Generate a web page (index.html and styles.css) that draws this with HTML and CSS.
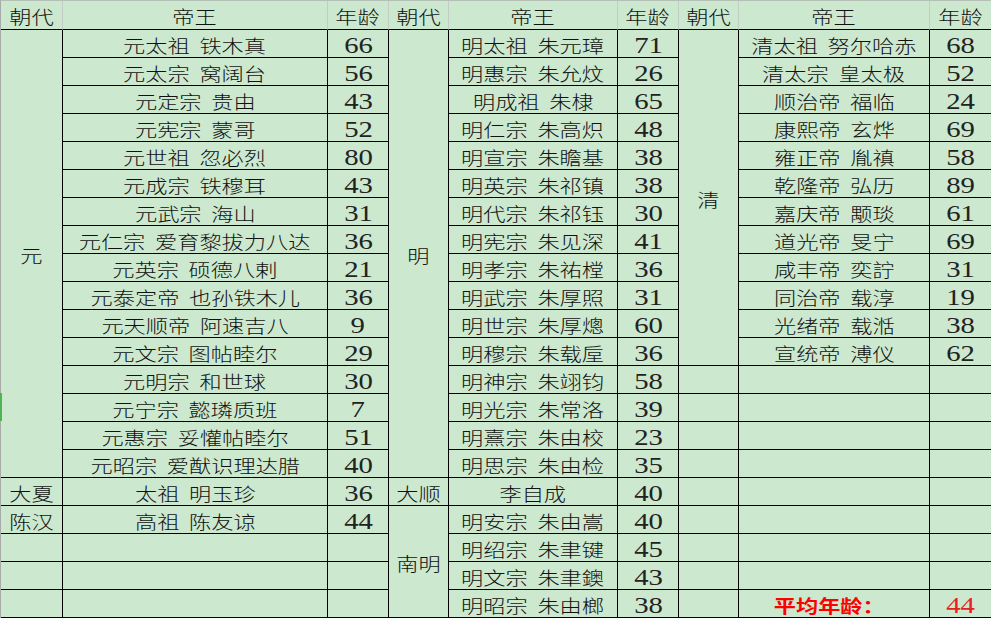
FILE: index.html
```html
<!DOCTYPE html>
<html lang="zh-CN">
<head>
<meta charset="utf-8">
<title>帝王年龄</title>
<link rel="stylesheet" href="styles.css">
</head>
<body>
<div class="sheet">
  <div class="c h"><span class="t">朝代</span></div>
  <div class="c h"><span class="t">帝王</span></div>
  <div class="c h"><span class="t">年龄</span></div>
  <div class="c h"><span class="t">朝代</span></div>
  <div class="c h"><span class="t">帝王</span></div>
  <div class="c h"><span class="t">年龄</span></div>
  <div class="c h"><span class="t">朝代</span></div>
  <div class="c h"><span class="t">帝王</span></div>
  <div class="c h r"><span class="t">年龄</span></div>

  <div class="c span16"><span class="t">元</span></div>
  <div class="c"><span class="t">元太祖 铁木真</span></div>
  <div class="c n"><span class="num">66</span></div>
  <div class="c span16"><span class="t">明</span></div>
  <div class="c"><span class="t">明太祖 朱元璋</span></div>
  <div class="c n"><span class="num">71</span></div>
  <div class="c span12"><span class="t">清</span></div>
  <div class="c"><span class="t">清太祖 努尔哈赤</span></div>
  <div class="c n r"><span class="num">68</span></div>

  <div class="c"><span class="t">元太宗 窝阔台</span></div>
  <div class="c n"><span class="num">56</span></div>
  <div class="c"><span class="t">明惠宗 朱允炆</span></div>
  <div class="c n"><span class="num">26</span></div>
  <div class="c"><span class="t">清太宗 皇太极</span></div>
  <div class="c n r"><span class="num">52</span></div>

  <div class="c"><span class="t">元定宗 贵由</span></div>
  <div class="c n"><span class="num">43</span></div>
  <div class="c"><span class="t">明成祖 朱棣</span></div>
  <div class="c n"><span class="num">65</span></div>
  <div class="c"><span class="t">顺治帝 福临</span></div>
  <div class="c n r"><span class="num">24</span></div>

  <div class="c"><span class="t">元宪宗 蒙哥</span></div>
  <div class="c n"><span class="num">52</span></div>
  <div class="c"><span class="t">明仁宗 朱高炽</span></div>
  <div class="c n"><span class="num">48</span></div>
  <div class="c"><span class="t">康熙帝 玄烨</span></div>
  <div class="c n r"><span class="num">69</span></div>

  <div class="c"><span class="t">元世祖 忽必烈</span></div>
  <div class="c n"><span class="num">80</span></div>
  <div class="c"><span class="t">明宣宗 朱瞻基</span></div>
  <div class="c n"><span class="num">38</span></div>
  <div class="c"><span class="t">雍正帝 胤禛</span></div>
  <div class="c n r"><span class="num">58</span></div>

  <div class="c"><span class="t">元成宗 铁穆耳</span></div>
  <div class="c n"><span class="num">43</span></div>
  <div class="c"><span class="t">明英宗 朱祁镇</span></div>
  <div class="c n"><span class="num">38</span></div>
  <div class="c"><span class="t">乾隆帝 弘历</span></div>
  <div class="c n r"><span class="num">89</span></div>

  <div class="c"><span class="t">元武宗 海山</span></div>
  <div class="c n"><span class="num">31</span></div>
  <div class="c"><span class="t">明代宗 朱祁钰</span></div>
  <div class="c n"><span class="num">30</span></div>
  <div class="c"><span class="t">嘉庆帝 颙琰</span></div>
  <div class="c n r"><span class="num">61</span></div>

  <div class="c"><span class="t">元仁宗 爱育黎拔力八达</span></div>
  <div class="c n"><span class="num">36</span></div>
  <div class="c"><span class="t">明宪宗 朱见深</span></div>
  <div class="c n"><span class="num">41</span></div>
  <div class="c"><span class="t">道光帝 旻宁</span></div>
  <div class="c n r"><span class="num">69</span></div>

  <div class="c"><span class="t">元英宗 硕德八剌</span></div>
  <div class="c n"><span class="num">21</span></div>
  <div class="c"><span class="t">明孝宗 朱祐樘</span></div>
  <div class="c n"><span class="num">36</span></div>
  <div class="c"><span class="t">咸丰帝 奕詝</span></div>
  <div class="c n r"><span class="num">31</span></div>

  <div class="c"><span class="t">元泰定帝 也孙铁木儿</span></div>
  <div class="c n"><span class="num">36</span></div>
  <div class="c"><span class="t">明武宗 朱厚照</span></div>
  <div class="c n"><span class="num">31</span></div>
  <div class="c"><span class="t">同治帝 载淳</span></div>
  <div class="c n r"><span class="num">19</span></div>

  <div class="c"><span class="t">元天顺帝 阿速吉八</span></div>
  <div class="c n"><span class="num">9</span></div>
  <div class="c"><span class="t">明世宗 朱厚熜</span></div>
  <div class="c n"><span class="num">60</span></div>
  <div class="c"><span class="t">光绪帝 载湉</span></div>
  <div class="c n r"><span class="num">38</span></div>

  <div class="c"><span class="t">元文宗 图帖睦尔</span></div>
  <div class="c n"><span class="num">29</span></div>
  <div class="c"><span class="t">明穆宗 朱载垕</span></div>
  <div class="c n"><span class="num">36</span></div>
  <div class="c"><span class="t">宣统帝 溥仪</span></div>
  <div class="c n r"><span class="num">62</span></div>

  <div class="c"><span class="t">元明宗 和世球</span></div>
  <div class="c n"><span class="num">30</span></div>
  <div class="c"><span class="t">明神宗 朱翊钧</span></div>
  <div class="c n"><span class="num">58</span></div>
  <div class="c"></div>
  <div class="c"></div>
  <div class="c r"></div>

  <div class="c"><span class="t">元宁宗 懿璘质班</span></div>
  <div class="c n"><span class="num">7</span></div>
  <div class="c"><span class="t">明光宗 朱常洛</span></div>
  <div class="c n"><span class="num">39</span></div>
  <div class="c"></div>
  <div class="c"></div>
  <div class="c r"></div>

  <div class="c"><span class="t">元惠宗 妥懽帖睦尔</span></div>
  <div class="c n"><span class="num">51</span></div>
  <div class="c"><span class="t">明熹宗 朱由校</span></div>
  <div class="c n"><span class="num">23</span></div>
  <div class="c"></div>
  <div class="c"></div>
  <div class="c r"></div>

  <div class="c"><span class="t">元昭宗 爱猷识理达腊</span></div>
  <div class="c n"><span class="num">40</span></div>
  <div class="c"><span class="t">明思宗 朱由检</span></div>
  <div class="c n"><span class="num">35</span></div>
  <div class="c"></div>
  <div class="c"></div>
  <div class="c r"></div>

  <div class="c"><span class="t">大夏</span></div>
  <div class="c"><span class="t">太祖 明玉珍</span></div>
  <div class="c n"><span class="num">36</span></div>
  <div class="c"><span class="t">大顺</span></div>
  <div class="c"><span class="t">李自成</span></div>
  <div class="c n"><span class="num">40</span></div>
  <div class="c"></div>
  <div class="c"></div>
  <div class="c r"></div>

  <div class="c"><span class="t">陈汉</span></div>
  <div class="c"><span class="t">高祖 陈友谅</span></div>
  <div class="c n"><span class="num">44</span></div>
  <div class="c span4"><span class="t">南明</span></div>
  <div class="c"><span class="t">明安宗 朱由嵩</span></div>
  <div class="c n"><span class="num">40</span></div>
  <div class="c"></div>
  <div class="c"></div>
  <div class="c r"></div>

  <div class="c"></div>
  <div class="c"></div>
  <div class="c"></div>
  <div class="c"><span class="t">明绍宗 朱聿键</span></div>
  <div class="c n"><span class="num">45</span></div>
  <div class="c"></div>
  <div class="c"></div>
  <div class="c r"></div>

  <div class="c"></div>
  <div class="c"></div>
  <div class="c"></div>
  <div class="c"><span class="t">明文宗 朱聿鐭</span></div>
  <div class="c n"><span class="num">43</span></div>
  <div class="c"></div>
  <div class="c"></div>
  <div class="c r"></div>

  <div class="c"></div>
  <div class="c"></div>
  <div class="c"></div>
  <div class="c"><span class="t">明昭宗 朱由榔</span></div>
  <div class="c n"><span class="num">38</span></div>
  <div class="c"></div>
  <div class="c avg"><span class="t">平均年龄：</span></div>
  <div class="c n r avg-num"><span class="num">44</span></div>

  <div class="sel"></div>
</div>
</body>
</html>
```

FILE: styles.css
```css
html, body {
  margin: 0;
  padding: 0;
  background: #cce8cf;
  overflow: hidden;
}

.sheet {
  position: relative;
  width: 991px;
  box-sizing: border-box;
  display: grid;
  grid-template-columns: 62px 265px 61px 60px 169px 61px 60px 191px 61px;
  grid-template-rows: 29px repeat(21, 28px);
  border-top: 1px solid #b4bfb5;
  border-left: 1px solid #a8aca8;
  background: #cce8cf;
  font-family: "Noto Sans CJK SC", sans-serif;
  font-size: 18.5px;
  font-weight: 300;
  color: #111;
}

.c {
  box-sizing: border-box;
  border-right: 1px solid #000;
  border-bottom: 1px solid #000;
  display: flex;
  align-items: center;
  justify-content: center;
  padding-top: 3px;
  line-height: 1;
  white-space: nowrap;
}

.h {
  border-right-color: #c3cdc4;
}

.r {
  border-right: 0;
}

.span16 { grid-row: span 16; }
.span12 { grid-row: span 12; }
.span4 { grid-row: span 4; }

.t {
  display: inline-block;
  transform: scaleX(1.2);
  word-spacing: 4px;
}

.sheet .c .num {
  display: inline-block;
  font-family: "Liberation Serif", serif;
  font-size: 23px;
  font-weight: 400;
  transform: scaleX(1.25);
  color: #222;
}

.avg {
  color: #f00;
  font-weight: 700;
  padding-right: 10px;
}

.sheet .avg-num .num {
  color: #e52222;
}

.sel {
  position: absolute;
  left: -1px;
  top: 392px;
  width: 2px;
  height: 28px;
  background: #4fb453;
}
```
